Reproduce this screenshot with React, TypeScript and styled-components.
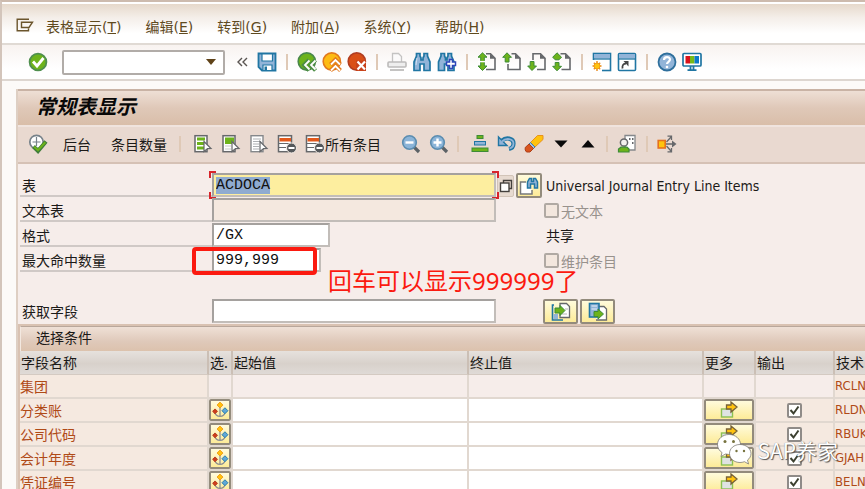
import React, { useEffect, useRef } from "react";
import styled, { createGlobalStyle, css } from "styled-components";

const ui = `"DejaVu Sans", "Noto Sans CJK SC", sans-serif`;
const narrow = `"DejaVu Sans Condensed", "DejaVu Sans", "Noto Sans CJK SC", sans-serif`;
const cjk = `"Noto Sans CJK SC", sans-serif`;
const mono = `"Liberation Mono", monospace`;

const GlobalStyle = createGlobalStyle`
  *, *::before, *::after { box-sizing: border-box; }
  body { margin: 0; overflow: hidden; font-family: ${ui}; font-size: 14px; color: #1c1a18; }
  button, input { font: inherit; color: inherit; margin: 0; }
`;

/* ---------- frame ---------- */

const Window = styled.div`
  position: relative;
  height: 100vh;
  overflow: hidden;
  display: flex;
  flex-direction: column;
  background: #fcfaf8;
  border-top: 2px solid #cdbbae;
  border-left: 2px solid #d3c5bb;
`;

const MenuBar = styled.nav`
  flex: none;
  height: 43px;
  display: flex;
  align-items: center;
  gap: 24px;
  padding: 6px 14px 0;
  border-top: 2px solid #fff;
  border-bottom: 2px solid #e0dad4;
  background: linear-gradient(#e6d9cb, #f4eee9 35%, #fff 75%);
`;

const MenuItem = styled.button`
  height: 24px;
  padding: 0;
  border: 0;
  background: none;
  color: #5f4a1e;
  line-height: 20px;
  white-space: nowrap;
`;

const MenuIcon = styled(MenuItem)`
  width: 18px;
  height: 28px;
  margin-right: -12px;
`;

const ToolBar = styled.div`
  flex: none;
  height: 36px;
  display: flex;
  align-items: center;
  gap: 5px;
  padding: 0 26px;
  border-bottom: 2px solid #ddd6d0;
  background: linear-gradient(#f8f3f0, #fff 70%);
`;

const IconButton = styled.button`
  flex: none;
  display: flex;
  align-items: center;
  justify-content: center;
  width: 20px;
  height: 22px;
  padding: 0;
  border: 0;
  background: none;
`;

const Separator = styled.span`
  flex: none;
  width: 2px;
  height: 16px;
  margin: 0 4px;
  background: #dfc9b6;
`;

const CommandBox = styled.label`
  display: flex;
  align-items: center;
  width: 163px;
  height: 25px;
  margin: 0 2px 0 9px;
  padding-right: 7px;
  background: #fff;
  border: 2px solid #b1aca8;
  border-radius: 2px;
`;

const CommandInput = styled.input`
  flex: 1;
  min-width: 0;
  border: 0;
  outline: 0;
  background: none;
`;

const Screen = styled.main`
  flex: 1;
  min-height: 0;
  margin: 8px 0 0 14px;
  display: flex;
  flex-direction: column;
  border-left: 2px solid #decfc3;
  background: #f6edea;
`;

const ScreenTitle = styled.h1`
  flex: none;
  height: 36px;
  margin: 0;
  padding: 0 18px;
  border-top: 2px solid #c9b3a5;
  background: linear-gradient(#eedfd5, #dfc8b8 50%, #d9bea9);
  font: italic 700 20px/30px ${cjk};
  color: #080808;
`;

const AppBar = styled.div`
  flex: none;
  height: 39px;
  display: flex;
  align-items: center;
  padding: 0 10px 2px;
  border-top: 2px solid #f0e4de;
  border-bottom: 2px solid #d5c1b5;
  background: #e9d9d0;
`;

const AppGroup = styled.div<{ $gap: number; $lead?: number }>`
  flex: none;
  display: flex;
  align-items: center;
  gap: ${(p) => p.$gap}px;
  padding-left: ${(p) => p.$lead ?? 0}px;
`;

const TextButton = styled.button`
  flex: none;
  display: flex;
  align-items: center;
  height: 22px;
  padding: 0;
  border: 0;
  background: none;
  font: 14px/20px ${cjk};
  white-space: nowrap;
`;

/* ---------- form ---------- */

const Form = styled.form`
  flex: none;
  display: flex;
  flex-direction: column;
  padding: 9px 0 0 2px;
`;

const FormRow = styled.div<{ $spaced?: boolean }>`
  display: grid;
  grid-template-columns: 192px 284px 1fr;
  height: 25px;
  margin-top: ${(p) => (p.$spaced ? 26 : 0)}px;
`;

const FieldLabel = styled.label<{ $plain?: boolean }>`
  height: 24px;
  padding-left: 2px;
  border-bottom: ${(p) => (p.$plain ? "0" : "2px solid #d0c9c6")};
  font: 14px/25px ${cjk};
`;

const FieldSlot = styled.div`
  position: relative;
  height: 24px;
`;

const fieldTone = {
  plain: "#fff",
  active: "#fdee9f",
  locked: "#f4e8df",
};

const Field = styled.input<{ $width?: number; $tone?: keyof typeof fieldTone }>`
  display: block;
  width: ${(p) => (p.$width ? `${p.$width}px` : "100%")};
  height: 24px;
  padding: 0 2px;
  border: 2px solid #c2bdb9;
  border-top-color: #a5a19e;
  border-left-color: #a5a19e;
  outline: 0;
  background: ${(p) => fieldTone[p.$tone ?? "plain"]};
  font: 15px/18px ${mono};
  color: #111;
  &::selection { background: #8fabd0; color: #111; }
`;

const red = "linear-gradient(#d8252b, #d8252b)";
const FocusCorners = styled.span`
  position: absolute;
  inset: -2px -3px;
  pointer-events: none;
  background-image: ${red}, ${red}, ${red}, ${red}, ${red}, ${red}, ${red}, ${red};
  background-repeat: no-repeat;
  background-position: 0 0, 0 0, 100% 0, 100% 0, 0 100%, 0 100%, 100% 100%, 100% 100%;
  background-size: 7px 2px, 2px 7px, 7px 2px, 2px 7px, 7px 2px, 2px 7px, 7px 2px, 2px 7px;
`;

const Highlight = styled.span`
  position: absolute;
  left: -20px;
  top: -1px;
  width: 125px;
  height: 28px;
  border: 4px solid #fb1a10;
  border-radius: 4px;
  pointer-events: none;
`;

const Note = styled.span`
  position: absolute;
  left: 116px;
  top: 15px;
  font: 24px/36px "Noto Sans", ${cjk};
  color: #fb1a10;
  white-space: nowrap;
`;

const SideCell = styled.div<{ $indent: number }>`
  display: flex;
  align-items: center;
  gap: 2px;
  height: 25px;
  padding-left: ${(p) => p.$indent}px;
  font-size: 14px;
  line-height: 24px;
  white-space: nowrap;
`;

const Description = styled.output`
  padding-left: 2px;
  font: 14px/24px ${narrow};
`;

const yellowFace = css`
  border: 2px solid #938b7c;
  border-radius: 2px;
  background: linear-gradient(#fffbdc, #fdeb98);
`;

const PushButton = styled.button<{ $width: number }>`
  flex: none;
  display: flex;
  align-items: center;
  justify-content: center;
  width: ${(p) => p.$width}px;
  height: 25px;
  padding: 0;
  ${yellowFace}
`;

const ListButton = styled(PushButton)`
  height: 22px;
  border: 1px solid #d2c4b8;
  background: #e7dad0;
`;

const CheckLabel = styled.label`
  display: flex;
  align-items: center;
  gap: 2px;
  font: 14px/24px ${cjk};
  color: #98928d;
`;

const CheckBox = styled.input`
  appearance: none;
  flex: none;
  width: 15px;
  height: 15px;
  border: 2px solid #b0a9a3;
  border-radius: 2px;
  background: #f3e7de;
  &:checked {
    border-color: #8f8b88;
    background: #fff url("data:image/svg+xml,%3Csvg xmlns='http://www.w3.org/2000/svg' viewBox='0 0 11 11'%3E%3Cpath d='M1.5 5L4.5 8.5L9.5 1.5' fill='none' stroke='%233c4030' stroke-width='2'/%3E%3C/svg%3E") center / 11px no-repeat;
  }
`;

/* ---------- selection table ---------- */

const Panel = styled.section`
  flex: none;
  border-top: 2px solid #d9c2b2;
  border-left: 2px solid #d9c2b2;
`;

const PanelTitle = styled.h2`
  height: 25px;
  margin: 0;
  padding: 0 15px;
  border-top: 1px solid #b9a79b;
  border-left: 1px solid #f3e8e0;
  background: linear-gradient(#efe0d6, #dfc9ba 60%, #dcc2ad);
  font: 400 14px/20px ${cjk};
`;

const Grid = styled.table`
  width: 100%;
  table-layout: fixed;
  border-collapse: separate;
  border-spacing: 0;
`;

const Col = styled.col<{ $width?: number }>`
  width: ${(p) => (p.$width ? `${p.$width}px` : "auto")};
`;

const Head = styled.th`
  height: 24px;
  padding: 0 0 2px 1px;
  overflow: hidden;
  border-right: 2px solid #cbbfb5;
  border-bottom: 1px solid #d4cac2;
  background: linear-gradient(#e6e1dd, #d8d1cb 55%, #dfdad6);
  font: 400 14px/20px ${cjk};
  text-align: left;
  white-space: nowrap;
  &:last-child { border-right: 0; }
`;

const cellTone = { key: "#f5e9e0", blank: "#f6edea", input: "#fff" };

const Cell = styled.td<{ $tone: keyof typeof cellTone }>`
  height: 24px;
  padding: 0;
  overflow: hidden;
  border-right: 2px solid #e1d8d0;
  border-bottom: 2px solid #e1d8d0;
  background: ${(p) => cellTone[p.$tone]};
  color: #b04a17;
  font: 14px/20px ${cjk};
  white-space: nowrap;
  &:last-child {
    border-right: 0;
    font: 13px/20px ${narrow};
  }
`;

const CellInput = styled.input`
  display: block;
  width: 100%;
  height: 22px;
  padding: 0 2px;
  border: 0;
  outline: 0;
  background: none;
  font: 15px/18px ${mono};
`;

const CellButton = styled.button`
  display: flex;
  align-items: center;
  justify-content: center;
  width: 100%;
  height: 22px;
  padding: 0;
  ${yellowFace}
`;

const Center = styled.div`
  display: flex;
  justify-content: center;
`;

const Watermark = styled.div`
  position: absolute;
  right: 27px;
  bottom: 22px;
  display: flex;
  align-items: center;
  gap: 5px;
  color: #fff;
  font: 21px/30px ${cjk};
  text-shadow: 1px 1px 1px #555, 0 0 1px #777;
  pointer-events: none;
`;

/* ---------- icons ---------- */

const Svg = ({ children, w = 20, h = 20 }: { children: React.ReactNode; w?: number; h?: number }) => (
  <svg width={w} height={h} viewBox={`0 0 ${w} ${h}`} fill="none" aria-hidden="true">
    {children}
  </svg>
);

const G = "#6db31b";
const GD = "#3d8b37";
const B = "#2076a3";
const BL = "#92b4d8";
const K = "#66686b";

const icons: Record<string, React.ReactNode> = {
  menu: (
    <Svg w={18} h={14}>
      <path d="M13 1.2H1.2V12.8H12.5V10.5M5.5 4.2H16.5L13 9.5H5.5Z" stroke="#6b552c" strokeWidth="1.4" />
    </Svg>
  ),
  ok: (
    <Svg>
      <circle cx="10" cy="10" r="8.4" fill={G} stroke="#4f8f4e" strokeWidth="1.8" />
      <path d="M5 9.5L9 14L15.5 6" stroke="#fff" strokeWidth="2.8" />
    </Svg>
  ),
  chevrons: (
    <Svg>
      <path d="M10 6L6 10L10 14M15 6L11 10L15 14" stroke="#5a5552" strokeWidth="1.4" />
    </Svg>
  ),
  save: (
    <Svg>
      <path d="M1.5 1.5H18.5V18.5H5L1.5 15Z" fill={BL} stroke={B} strokeWidth="1.8" />
      <path d="M5 2H15.5V9H5Z" fill="#fff" stroke={B} strokeWidth="1.2" />
      <path d="M6 13H15V18.5H6Z" fill="#fff" stroke={B} strokeWidth="1.2" />
      <path d="M7.5 14.5H10V18H7.5Z" fill={B} />
    </Svg>
  ),
  back: (
    <Svg>
      <circle cx="9.8" cy="9.5" r="8.6" fill={G} stroke="#49884a" strokeWidth="1.6" />
      <path d="M12 8L7 13L12 18.5M18.5 8L13.5 13L18.5 18.5" stroke="#4c8d45" strokeWidth="4" />
      <path d="M12.5 8.5L8 13L12.5 17.5M18.5 8.5L14 13L18.5 17.5" stroke="#fff" strokeWidth="1.8" />
    </Svg>
  ),
  exit: (
    <Svg>
      <circle cx="9.8" cy="9.5" r="8.6" fill="#fdbb14" stroke="#e2791d" strokeWidth="1.6" />
      <path d="M8.5 12.5L13.5 7.5L18.5 12.5M8.5 18.5L13.5 13.5L18.5 18.5" stroke="#e2791d" strokeWidth="4" />
      <path d="M9 12.5L13.5 8L18 12.5M9 18.5L13.5 14L18 18.5" stroke="#fff" strokeWidth="1.8" />
    </Svg>
  ),
  cancel: (
    <Svg>
      <circle cx="9.8" cy="9.5" r="8.6" fill="#d94f16" stroke="#b13d21" strokeWidth="1.6" />
      <path d="M9 8.5H19V19H9Z" fill="#c8421a" />
      <path d="M10.5 9.5L18 17.5M18 9.5L10.5 17.5" stroke="#fff" strokeWidth="2.2" />
    </Svg>
  ),
  print: (
    <Svg>
      <path d="M5.5 10V1.5H11.5L14.5 4.5V10" fill="#fbfafa" stroke="#c4c3c2" strokeWidth="1.3" />
      <rect x="1" y="10" width="18" height="5" rx="1" fill="#eee" stroke="#bcbbba" strokeWidth="1.6" />
      <path d="M3 18H17" stroke="#c4c3c2" strokeWidth="2" />
    </Svg>
  ),
  find: (
    <Svg>
      <path d="M4.5 1.5H8V4L9 6V8H11V6L12 4V1.5H15.5V4L18 10V18.5H12V12H8V18.5H2V10L4.5 4Z" fill={BL} stroke={B} strokeWidth="1.7" />
      <path d="M5 6L4 13" stroke="#cfe0f0" strokeWidth="1" />
    </Svg>
  ),
  findNext: (
    <Svg>
      <path d="M4 1.5H7.5V4L8.5 6V8H10V6L11 4V1.5H14.5V4L17 10V18.5H11V12H7.5V18.5H1.5V10L4 4Z" fill={BL} stroke={B} strokeWidth="1.7" />
      <path d="M12.5 7.5H15.5V10H18.5V13.5H15.5V16.5H12.5V13.5H9.5V10H12.5Z" fill="#fff" stroke="#2c46b8" strokeWidth="1.5" />
    </Svg>
  ),
  pageFirst: (
    <Svg>
      <path d="M9 1.8H13.5L18 6.3V17.5H9" stroke={K} strokeWidth="1.6" />
      <path d="M13 1.5V6.8H18.5Z" fill={K} />
      <path d="M5.5 0.8L10 5.2H7.3V14H10L5.5 18.5L1 14H3.7V5.2H1Z" fill={G} stroke={GD} strokeWidth="1" />
      <path d="M1 9.6H10" stroke="#fff" strokeWidth="1.4" />
    </Svg>
  ),
  pageUp: (
    <Svg>
      <path d="M9.5 1.8H13.5L18 6.3V17.5H6V12" stroke={K} strokeWidth="1.6" />
      <path d="M13 1.5V6.8H18.5Z" fill={K} />
      <path d="M5 0.8L9.5 5.3H7V10H3.2V5.3H0.7Z" fill={G} stroke={GD} strokeWidth="1" />
    </Svg>
  ),
  pageDown: (
    <Svg>
      <path d="M6 8V1.8H13.5L18 6.3V17.5H10" stroke={K} strokeWidth="1.6" />
      <path d="M13 1.5V6.8H18.5Z" fill={K} />
      <path d="M5 18.5L9.5 14H7V9.5H3.2V14H0.7Z" fill={G} stroke={GD} strokeWidth="1" />
    </Svg>
  ),
  pageLast: (
    <Svg>
      <path d="M8.5 1.8H13.5L18 6.3V17.5H9.5" stroke={K} strokeWidth="1.6" />
      <path d="M13 1.5V6.8H18.5Z" fill={K} />
      <path d="M5 0.8L9.5 5.2L7 7.8H3.2L0.7 5.2Z M5 18.8L9.5 14.3H7V10.5H3.2V14.3H0.7Z" fill={G} stroke={GD} strokeWidth="1" />
    </Svg>
  ),
  session: (
    <Svg>
      <rect x="1.5" y="1.5" width="17" height="17" fill="#fff" stroke={B} strokeWidth="1.6" />
      <path d="M2 2H18V6.5H2Z" fill={BL} />
      <path d="M1 7H19" stroke={B} strokeWidth="1.3" />
      <path d="M0 8H10V20H0Z" fill="#fff" />
      <path d="M5 9V19M0.5 14H9.5M1.8 10.8L8.2 17.2M8.2 10.8L1.8 17.2" stroke="#e88a1c" strokeWidth="1.4" />
      <circle cx="5" cy="14" r="3" fill="#ffc40e" stroke="#ee9a1c" />
    </Svg>
  ),
  shortcut: (
    <Svg>
      <rect x="1.5" y="1.5" width="17" height="17" rx="1" fill="#fff" stroke={B} strokeWidth="1.6" />
      <path d="M2 2H18V6.5H2Z" fill={BL} />
      <path d="M1 7H19" stroke={B} strokeWidth="1.3" />
      <path d="M5.5 16.5C5 13 6.5 11.5 9 11.5" stroke="#444" strokeWidth="1.8" />
      <path d="M6.5 9H11.5V14.5Z" fill="#444" />
    </Svg>
  ),
  help: (
    <Svg>
      <circle cx="10" cy="10" r="8.5" fill={BL} stroke="#2f6f9c" strokeWidth="1.8" />
      <path d="M7 8C7 4.2 13 4.2 13 7.6C13 9.8 10 9.8 10 12" stroke="#fff" strokeWidth="2.2" />
      <circle cx="10" cy="15" r="1.3" fill="#fff" />
    </Svg>
  ),
  monitor: (
    <Svg>
      <rect x="1" y="1.5" width="18" height="12.5" rx="1" fill="#fff" stroke={B} strokeWidth="1.7" />
      <path d="M3.5 4H8V11.5H3.5Z" fill="#d9121a" />
      <path d="M8 4H12.5V11.5H8Z" fill="#76b916" />
      <path d="M12.5 4H17V11.5H12.5Z" fill="#0a79c8" />
      <path d="M8.5 14V18M11.5 14V18M5.5 18.2H14.5" stroke={B} strokeWidth="1.8" />
    </Svg>
  ),
  execute: (
    <Svg>
      <circle cx="8.5" cy="8" r="6.7" fill="#fff" stroke="#77828a" strokeWidth="1.7" />
      <path d="M8.5 3V12M4.5 8H12.5" stroke="#77828a" strokeWidth="1.2" />
      <path d="M5.5 12.5L10 17L18 7.5" stroke="#3f7d3a" strokeWidth="4" />
      <path d="M6.2 12.8L10 16.2L17.3 8.3" stroke={G} strokeWidth="2" />
    </Svg>
  ),
  selectAll: (
    <Svg>
      <rect x="2" y="1.7" width="12" height="16" fill="#fff" stroke={K} strokeWidth="1.5" />
      <path d="M4 5H12M4 9.5H12M4 14H12" stroke={G} strokeWidth="2.8" />
      <path d="M11 7.5L18 14.5L14.5 14.7L11 17.5Z" fill="#fff" stroke={K} strokeWidth="1.2" />
    </Svg>
  ),
  selectBlock: (
    <Svg>
      <rect x="2" y="1.7" width="12" height="16" fill="#fff" stroke={K} strokeWidth="1.5" />
      <path d="M4 3.5H13V10H4Z" fill={G} />
      <path d="M4 12H10M4 15H10" stroke="#c9c9c9" />
      <path d="M11 7.5L18 14.5L14.5 14.7L11 17.5Z" fill="#fff" stroke={K} strokeWidth="1.2" />
    </Svg>
  ),
  deselect: (
    <Svg>
      <rect x="2" y="1.7" width="12" height="16" fill="#fff" stroke="#85888b" strokeWidth="1.4" />
      <path d="M4 5H12M4 7.5H12M4 10H10M4 12.5H10M4 15H10" stroke="#aeb1b4" />
      <path d="M11 7.5L18 14.5L14.5 14.7L11 17.5Z" fill="#fff" stroke={K} strokeWidth="1.2" />
    </Svg>
  ),
  removeRow: (
    <Svg>
      <rect x="1.5" y="1.7" width="13" height="16" fill="#fff" stroke={K} strokeWidth="1.5" />
      <path d="M2.5 4H14V7.5H2.5Z" fill="#e2581b" />
      <path d="M2 9.5H14M2 13.5H9" stroke={K} />
      <circle cx="14.5" cy="14" r="5" fill="#55585b" stroke="#f4ece6" />
      <path d="M11.5 14H17.5" stroke="#fff" strokeWidth="2" />
    </Svg>
  ),
  zoomOut: (
    <Svg>
      <path d="M12.5 12.5L18 18" stroke="#5c6266" strokeWidth="3.2" />
      <circle cx="8.5" cy="8.5" r="6.8" fill="#8bb4d8" stroke="#5b8db0" strokeWidth="1.6" />
      <path d="M4.5 8.5H12.5" stroke="#fff" strokeWidth="2.4" />
    </Svg>
  ),
  zoomIn: (
    <Svg>
      <path d="M12.5 12.5L18 18" stroke="#5c6266" strokeWidth="3.2" />
      <circle cx="8.5" cy="8.5" r="6.8" fill="#8bb4d8" stroke="#5b8db0" strokeWidth="1.6" />
      <path d="M4.5 8.5H12.5M8.5 4.5V12.5" stroke="#fff" strokeWidth="2.4" />
    </Svg>
  ),
  stack: (
    <Svg>
      <rect x="7" y="1.5" width="6" height="3" fill={G} stroke={GD} />
      <rect x="4.5" y="7.5" width="11" height="3.5" fill={BL} stroke={B} />
      <rect x="2" y="14" width="16" height="3.5" fill={G} stroke={GD} />
    </Svg>
  ),
  undo: (
    <Svg>
      <path d="M5 6.5C9 3 16.5 4 16.5 9.5C16.5 12.5 14.5 14.5 12 15" stroke={B} strokeWidth="4.2" />
      <path d="M1.5 3V11.5H10Z" fill={BL} stroke={B} strokeWidth="1.4" />
      <path d="M5 7.5C9 3.5 16.5 4.5 16.5 9.5C16.5 12 14.8 13.8 12.5 14.5" stroke={BL} strokeWidth="1.8" />
    </Svg>
  ),
  eraser: (
    <Svg>
      <path d="M13.5 1.5H19V5.5L11 13L6.5 8.5Z" fill="#ffc20e" stroke="#e8921c" />
      <path d="M6.5 8.5L11 13L9.5 14.5L5 10Z" fill="#9ec1e2" stroke="#4478a4" />
      <path d="M5 10L9.5 14.5L6 18H2.5L1.2 16V13.5Z" fill="#d9551e" stroke="#ad3f18" />
    </Svg>
  ),
  down: (
    <Svg>
      <path d="M3.5 6.5H16.5L10 13.5Z" fill="#0a0a0a" />
    </Svg>
  ),
  up: (
    <Svg>
      <path d="M3.5 13.5H16.5L10 6Z" fill="#0a0a0a" />
    </Svg>
  ),
  userCard: (
    <Svg>
      <path d="M8 1.5H18V16H8Z" fill="#fff" stroke="#85888b" strokeWidth="1.3" />
      <path d="M12 5H13.5M15 5H16.5M15 9H16.5" stroke={K} strokeWidth="2" />
      <circle cx="7" cy="8.5" r="3.6" fill="#f4f1ee" stroke={K} strokeWidth="1.5" />
      <path d="M1.5 18V15L4 13.2H10L12 15V18Z" fill={G} stroke={GD} strokeWidth="1.2" />
    </Svg>
  ),
  branch: (
    <Svg>
      <rect x="1.2" y="6.5" width="7" height="7.5" fill="#ffc40e" stroke="#e5711f" strokeWidth="1.6" />
      <path d="M9 10H18M9.5 8L14 3M9.5 12L14 17M10.5 2.2H14.5V6M10.5 17.8H14.5V14" stroke={K} strokeWidth="1.3" />
      <path d="M15 6.5L19.5 10L15 13.5Z" fill={K} />
    </Svg>
  ),
  copies: (
    <Svg w={14} h={14}>
      <path d="M4.5 4V1.5H12.5V9.5H10" stroke="#44403d" strokeWidth="1.4" />
      <rect x="1.5" y="4" width="8.5" height="8.5" fill="#fff" stroke="#44403d" strokeWidth="1.4" />
    </Svg>
  ),
  match: (
    <Svg>
      <path d="M7 6H1.5V18H13V14" fill="#fff" stroke="#77797b" strokeWidth="1.5" />
      <path d="M8.5 10V6L10.5 2.5H12.5V5.5H14.5V2.5H16.5L18.5 6V12H15.5V8H11.5V12H8.5Z" fill={BL} stroke={B} strokeWidth="1.5" />
    </Svg>
  ),
  importPage: (
    <Svg>
      <path d="M3 3H1.5V18H12" stroke={B} strokeWidth="1.6" />
      <path d="M2.5 12H7V17H2.5Z" fill={BL} />
      <path d="M9 1.5H15.5L18.5 4.5V15.5H9Z" fill="#fff" stroke={K} strokeWidth="1.3" />
      <path d="M11 12H16M14 7H17" stroke="#b5b5b5" />
      <path d="M4 6H9V3.5L14 8.5L9 13.5V11H4Z" fill={G} stroke={GD} />
    </Svg>
  ),
  exportPage: (
    <Svg>
      <path d="M11 4.5H16L18.5 7V18H8" fill="#fff" stroke={K} strokeWidth="1.3" />
      <rect x="1.5" y="1.5" width="9.5" height="13.5" fill={BL} stroke={B} strokeWidth="1.6" />
      <path d="M3.5 4H9M3.5 7H9" stroke="#e7f0f8" />
      <path d="M6 9.5H10V7L15.5 12L10 17V14.5H6Z" fill={G} stroke={GD} />
    </Svg>
  ),
  options: (
    <Svg>
      <path d="M10 6V17M4.5 13C5 16 7.5 17 10 17.2C12.5 17 15 16 15.5 13" stroke="#8d8f91" strokeWidth="1.4" />
      <path d="M10 1.2L13.3 4.5L10 7.8L6.7 4.5Z" fill="#ffc20e" stroke="#f09a14" />
      <path d="M4.5 8.8L7.2 11.5L4.5 14.2L1.8 11.5Z" fill="#cf3d1a" stroke="#b0351a" />
      <path d="M15.5 7.5L18.8 10.8L15.5 14.1L12.2 10.8Z" fill="#5fa7d8" stroke={B} />
    </Svg>
  ),
  more: (
    <Svg w={18} h={18}>
      <rect x="1.5" y="8" width="11" height="8" fill="#dfe3e3" stroke="#8cc152" strokeWidth="1.4" />
      <path d="M6.5 4H11V1L17 6L11 11V8H6.5Z" fill="#ffc20e" stroke="#786238" strokeWidth="1.3" />
    </Svg>
  ),
  caret: (
    <Svg w={10} h={6}>
      <path d="M0 0H10L5 6Z" fill="#5f4218" />
    </Svg>
  ),
  chat: (
    <Svg w={36} h={34}>
      <g stroke="#6d6a66" strokeWidth="0.7" fill="#fff">
        <path d="M13 1.5C6.5 1.5 1.5 6 1.5 11.5C1.5 15 3.3 17.8 6 19.5L5 23.5L9.5 21C18 23 24.5 17.5 24.5 11.5C24.5 6 19.5 1.5 13 1.5Z" />
        <path d="M24 11.5C18 11.5 13.5 15.5 13.5 20.5C13.5 25.5 18 29.5 24 29.5C25.5 29.5 27 29.2 28.5 28.7L32.5 31L31.5 27C33.8 25.5 35 23 35 20.5C35 15.5 30 11.5 24 11.5Z" />
      </g>
      <g fill="#77733f">
        <circle cx="9" cy="8.5" r="1.5" />
        <circle cx="17.5" cy="8.5" r="1.5" />
        <circle cx="20.5" cy="18" r="1.2" />
        <circle cx="28" cy="18" r="1.2" />
      </g>
    </Svg>
  ),
};

const Tool = ({ name, label }: { name: string; label: string }) => (
  <IconButton type="button" aria-label={label}>
    {icons[name]}
  </IconButton>
);

/* ---------- data ---------- */

const menus: [string, string][] = [
  ["表格显示", "T"],
  ["编辑", "E"],
  ["转到", "G"],
  ["附加", "A"],
  ["系统", "Y"],
  ["帮助", "H"],
];

const toolGroups: [string, string][][] = [
  [["save", "保存"]],
  [["back", "返回"], ["exit", "退出"], ["cancel", "取消"]],
  [["print", "打印"], ["find", "查找"], ["findNext", "继续查找"]],
  [["pageFirst", "第一页"], ["pageUp", "上一页"], ["pageDown", "下一页"], ["pageLast", "最后一页"]],
  [["session", "新建会话"], ["shortcut", "创建快捷方式"]],
  [["help", "帮助"], ["monitor", "本地布局"]],
];

const rows = [
  { name: "集团", tech: "RCLN", open: false },
  { name: "分类账", tech: "RLDN", open: true },
  { name: "公司代码", tech: "RBUK", open: true },
  { name: "会计年度", tech: "GJAH", open: true },
  { name: "凭证编号", tech: "BELN", open: true },
];

const columns: [string, number?][] = [
  ["字段名称", 189],
  ["选.", 24],
  ["起始值", 236],
  ["终止值", 235],
  ["更多", 52],
  ["输出", 79],
  ["技术"],
];

export default function App() {
  const tableField = useRef<HTMLInputElement>(null);
  useEffect(() => {
    tableField.current?.focus();
    tableField.current?.select();
  }, []);

  return (
    <>
      <GlobalStyle />
      <Window>
        <MenuBar>
          <MenuIcon type="button" aria-label="系统菜单">{icons.menu}</MenuIcon>
          {menus.map(([text, key]) => (
            <MenuItem type="button" key={key}>
              {text}(<u>{key}</u>)
            </MenuItem>
          ))}
        </MenuBar>

        <ToolBar>
          <Tool name="ok" label="确认" />
          <CommandBox>
            <CommandInput aria-label="命令" />
            {icons.caret}
          </CommandBox>
          <Tool name="chevrons" label="收起" />
          {toolGroups.map((group, i) => (
            <React.Fragment key={i}>
              {i > 0 && <Separator />}
              {group.map(([name, label]) => (
                <Tool key={name} name={name} label={label} />
              ))}
            </React.Fragment>
          ))}
        </ToolBar>

        <Screen>
          <ScreenTitle>常规表显示</ScreenTitle>
          <AppBar>
            <AppGroup $gap={15}>
              <Tool name="execute" label="执行" />
              <TextButton type="button">后台</TextButton>
            </AppGroup>
            <AppGroup $gap={8} $lead={20}>
              <TextButton type="button">条目数量</TextButton>
              <Separator />
              <Tool name="selectAll" label="全选" />
              <Tool name="selectBlock" label="选择块" />
              <Tool name="deselect" label="取消选择" />
              <Tool name="removeRow" label="删除条目" />
              <TextButton type="button">
                {icons.removeRow}
                所有条目
              </TextButton>
            </AppGroup>
            <AppGroup $gap={8} $lead={20}>
              <Tool name="zoomOut" label="缩小" />
              <Tool name="zoomIn" label="放大" />
            </AppGroup>
            <AppGroup $gap={7} $lead={4}>
              <Separator />
              <Tool name="stack" label="层次" />
              <Tool name="undo" label="撤销" />
              <Tool name="eraser" label="清除" />
              <Tool name="down" label="向下" />
              <Tool name="up" label="向上" />
            </AppGroup>
            <AppGroup $gap={5} $lead={4}>
              <Separator />
              <Tool name="userCard" label="用户" />
              <Separator />
              <Tool name="branch" label="分支" />
            </AppGroup>
          </AppBar>

          <Form onSubmit={(e) => e.preventDefault()}>
            <FormRow>
              <FieldLabel htmlFor="table">表</FieldLabel>
              <FieldSlot>
                <Field id="table" ref={tableField} $tone="active" defaultValue="ACDOCA" spellCheck={false} />
                <FocusCorners />
              </FieldSlot>
              <SideCell $indent={1}>
                <ListButton type="button" $width={17} aria-label="值列表">{icons.copies}</ListButton>
                <PushButton type="button" $width={26} aria-label="搜索帮助">{icons.match}</PushButton>
                <Description htmlFor="table">Universal Journal Entry Line Items</Description>
              </SideCell>
            </FormRow>
            <FormRow>
              <FieldLabel htmlFor="textTable">文本表</FieldLabel>
              <FieldSlot>
                <Field id="textTable" $tone="locked" readOnly />
              </FieldSlot>
              <SideCell $indent={48}>
                <CheckLabel>
                  <CheckBox type="checkbox" disabled />
                  无文本
                </CheckLabel>
              </SideCell>
            </FormRow>
            <FormRow>
              <FieldLabel htmlFor="layout">格式</FieldLabel>
              <FieldSlot>
                <Field id="layout" $width={118} defaultValue="/GX" spellCheck={false} />
              </FieldSlot>
              <SideCell $indent={50}>共享</SideCell>
            </FormRow>
            <FormRow>
              <FieldLabel htmlFor="maxHits">最大命中数量</FieldLabel>
              <FieldSlot>
                <Field id="maxHits" $width={109} defaultValue="999,999" />
                <Highlight />
                <Note>回车可以显示999999了</Note>
              </FieldSlot>
              <SideCell $indent={48}>
                <CheckLabel>
                  <CheckBox type="checkbox" disabled />
                  维护条目
                </CheckLabel>
              </SideCell>
            </FormRow>
            <FormRow $spaced>
              <FieldLabel htmlFor="getField" $plain>获取字段</FieldLabel>
              <FieldSlot>
                <Field id="getField" />
              </FieldSlot>
              <SideCell $indent={47}>
                <PushButton type="button" $width={35} aria-label="导入">{icons.importPage}</PushButton>
                <PushButton type="button" $width={35} aria-label="导出">{icons.exportPage}</PushButton>
              </SideCell>
            </FormRow>
          </Form>

          <Panel>
            <PanelTitle>选择条件</PanelTitle>
            <Grid>
              <colgroup>
                {columns.map(([title, width]) => (
                  <Col key={title} $width={width} />
                ))}
              </colgroup>
              <thead>
                <tr>
                  {columns.map(([title]) => (
                    <Head key={title} scope="col">{title}</Head>
                  ))}
                </tr>
              </thead>
              <tbody>
                {rows.map(({ name, tech, open }) => (
                  <tr key={tech}>
                    <Cell $tone="key">{name}</Cell>
                    <Cell $tone="blank">
                      {open && <CellButton type="button" aria-label={`${name} 选项`}>{icons.options}</CellButton>}
                    </Cell>
                    <Cell $tone={open ? "input" : "blank"}>
                      {open && <CellInput aria-label={`${name} 起始值`} />}
                    </Cell>
                    <Cell $tone={open ? "input" : "blank"}>
                      {open && <CellInput aria-label={`${name} 终止值`} />}
                    </Cell>
                    <Cell $tone="blank">
                      {open && <CellButton type="button" aria-label={`${name} 更多`}>{icons.more}</CellButton>}
                    </Cell>
                    <Cell $tone={open ? "key" : "blank"}>
                      {open && (
                        <Center>
                          <CheckBox type="checkbox" defaultChecked aria-label={`${name} 输出`} />
                        </Center>
                      )}
                    </Cell>
                    <Cell $tone="key">{tech}</Cell>
                  </tr>
                ))}
              </tbody>
            </Grid>
          </Panel>
        </Screen>

        <Watermark>
          {icons.chat}
          SAP养家
        </Watermark>
      </Window>
    </>
  );
}
